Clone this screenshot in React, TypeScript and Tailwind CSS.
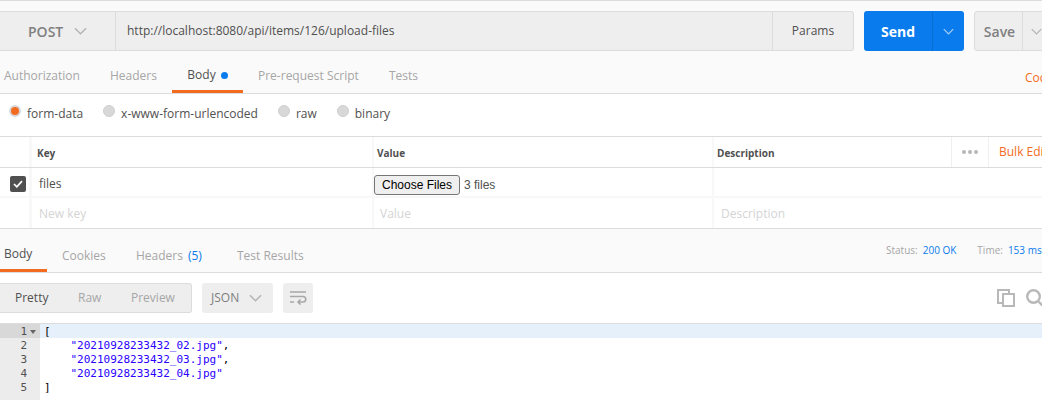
import React from 'react';

const sans = { fontFamily: '"Open Sans", sans-serif' };

function Chevron({ className }: { className?: string }) {
  return (
    <svg viewBox="0 0 14 8" className={className} fill="none" stroke="currentColor" strokeWidth="1.6">
      <path d="M1 1l6 6 6-6" />
    </svg>
  );
}

function Radio({ label, active }: { label: string; active?: boolean }) {
  return (
    <div className="flex items-center gap-[6px]">
      {active ? (
        <span className="w-[12px] h-[12px] rounded-full bg-[#f26b21] border-2 border-[#d8d8d8] -mt-[6px]" />
      ) : (
        <span className="w-[12px] h-[12px] rounded-full bg-[#d8d8d8] border border-[#cfcfcf] -mt-[6px]" />
      )}
      <span className="text-[12px] text-[#505050] leading-none">{label}</span>
    </div>
  );
}

export default function App() {
  return (
    <div className="w-[1042px] h-[400px] overflow-hidden bg-white flex flex-col whitespace-nowrap" style={sans}>
      {/* request bar + tabs */}
      <div className="h-[94px] shrink-0 bg-[#fafafa] border-t border-b border-[#dcdcdc] flex flex-col">
        <div className="flex pt-[10px] h-[50px] shrink-0">
          <div className="w-[854px] shrink-0 h-[40px] flex bg-[#eeeeee] border-y border-r border-[#dcdcdc] rounded-r-[3px]">
            <div className="w-[116px] shrink-0 border-r border-[#dcdcdc] flex items-center pl-[28px] gap-[11px] text-[#808080]">
              <span className="text-[14px] font-semibold">POST</span>
              <Chevron className="w-[13px] h-[8px] text-[#b4b4b4]" />
            </div>
            <div className="flex-1 pl-[11px] flex items-center text-[12px] text-[#505050] -mt-[1px]">
              http://localhost:8080/api/items/126/upload-files
            </div>
            <div className="w-[81px] shrink-0 border-l border-[#dcdcdc] flex items-center justify-center text-[12px] text-[#505050]">
              Params
            </div>
          </div>
          <div className="ml-[10px] w-[100px] shrink-0 h-[40px] flex bg-[#097bed] rounded-[3px] text-white">
            <div className="w-[69px] flex items-center justify-center text-[14px] font-bold border-r border-[#0a6dd0]">Send</div>
            <div className="flex-1 flex items-center justify-center">
              <Chevron className="w-[11px] h-[7px] text-[#a5cdf5]" />
            </div>
          </div>
          <div className="ml-[10px] w-[80px] shrink-0 h-[40px] flex bg-[#eeeeee] border border-[#dcdcdc] rounded-[3px]">
            <div className="w-[48px] shrink-0 flex items-center justify-center pl-[2px] text-[14px] font-semibold text-[#808080] border-r border-[#dcdcdc]">Save</div>
            <div className="flex items-center pl-[8px]">
              <Chevron className="w-[11px] h-[7px] text-[#b4b4b4]" />
            </div>
          </div>
        </div>
        <div className="flex-1 flex text-[12px] text-[#a6a6a6] relative">
          <div className="pl-[4px] w-[110px] flex items-center h-[42px] pt-[8px]">Authorization</div>
          <div className="w-[62px] flex items-center h-[42px] pt-[8px]">Headers</div>
          <div className="w-[71px] h-[42px] border-b-[3px] border-[#f26b21] flex items-center justify-center gap-[5px] text-[#505050] pt-[9px]">
            <span>Body</span>
            <span className="w-[7px] h-[7px] rounded-full bg-[#097bed]" />
          </div>
          <div className="w-[146px] pl-[15px] flex items-center h-[42px] pt-[8px]">Pre-request Script</div>
          <div className="flex items-center h-[42px] pt-[8px]">Tests</div>
          <div className="absolute left-[1025px] top-[6px] h-[42px] flex items-center text-[#f26b21]">Code</div>
        </div>
      </div>

      {/* body type radios */}
      <div className="h-[42px] shrink-0 flex items-center pl-[9px] pb-[2px]">
        <div className="flex items-center gap-[20px]">
          <Radio label="form-data" active />
          <Radio label="x-www-form-urlencoded" />
          <Radio label="raw" />
          <Radio label="binary" />
        </div>
      </div>

      {/* params table */}
      <div className="shrink-0 border-t border-b border-[#dcdcdc]">
        <div className="flex h-[31px] border-b border-[#dcdcdc] text-[10px] font-bold text-[#505050]">
          <div className="w-[32px] shrink-0 border-r-[3px] border-[#f8f8f8]" />
          <div className="w-[342px] shrink-0 pl-[5px] pt-[2px] flex items-center border-r-2 border-[#f8f8f8]">Key</div>
          <div className="w-[340px] shrink-0 pl-[3px] pt-[2px] flex items-center border-r-2 border-[#f8f8f8]">Value</div>
          <div className="w-[238px] shrink-0 pl-[3px] pt-[2px] flex items-center border-r border-[#f0f0f0]">Description</div>
          <div className="w-[37px] shrink-0 flex items-center justify-center gap-[2px] border-r border-[#f0f0f0]">
            <span className="w-[4px] h-[4px] rounded-full bg-[#b8b8b8]" />
            <span className="w-[4px] h-[4px] rounded-full bg-[#b8b8b8]" />
            <span className="w-[4px] h-[4px] rounded-full bg-[#b8b8b8]" />
          </div>
          <div className="pl-[10px] flex items-center text-[12px] font-normal text-[#f26b21]">Bulk Edit</div>
        </div>
        <div className="flex h-[30px] border-b-2 border-[#f8f8f8] text-[12px] text-[#505050]">
          <div className="w-[32px] shrink-0 border-r-[3px] border-[#f8f8f8] flex items-center pl-[10px] pt-[4px]">
            <span className="w-[16px] h-[16px] rounded-[2px] bg-[#505050] flex items-center justify-center">
              <svg viewBox="0 0 12 10" className="w-[10px] h-[8px]" fill="none" stroke="#fff" strokeWidth="2.2">
                <path d="M1 5l3.5 3.5L11 1.5" />
              </svg>
            </span>
          </div>
          <div className="w-[342px] shrink-0 pl-[7px] pt-[4px] flex items-center border-r-2 border-[#f8f8f8]">files</div>
          <div className="w-[340px] shrink-0 pt-[6px] flex items-center border-r-2 border-[#f8f8f8]">
            <span className="h-[20px] w-[86px] flex items-center justify-center bg-[#efefef] border border-[#767676] rounded-[3px] text-[12px] text-black" style={{ fontFamily: '"Liberation Sans", sans-serif' }}>
              Choose Files
            </span>
            <span className="ml-[4px] text-[12px] text-[#505050]" style={{ fontFamily: '"Liberation Sans", sans-serif' }}>3 files</span>
          </div>
          <div className="flex-1" />
        </div>
        <div className="flex h-[30px] text-[12px] text-[#d4d4d4]">
          <div className="w-[32px] shrink-0 border-r-[3px] border-[#f8f8f8]" />
          <div className="w-[342px] shrink-0 pl-[7px] pt-[2px] flex items-center border-r-2 border-[#f8f8f8]">New key</div>
          <div className="w-[340px] shrink-0 pl-[6px] pt-[2px] flex items-center border-r-2 border-[#f8f8f8]">Value</div>
          <div className="pl-[7px] pt-[2px] flex items-center">Description</div>
        </div>
      </div>

      {/* response tabs */}
      <div className="h-[44px] shrink-0 bg-[#fafafa] border-b border-[#dcdcdc] flex text-[12px] text-[#a6a6a6] relative">
        <div className="w-[47px] h-[43px] pl-[4px] pt-[10px] border-b-[3px] border-[#f26b21] flex items-center text-[#505050]">Body</div>
        <div className="w-[89px] pl-[15px] pt-[10px] flex items-center h-[43px]">Cookies</div>
        <div className="w-[101px] pt-[10px] flex items-center h-[43px]">
          Headers<span className="ml-[5px] text-[#097bed]">(5)</span>
        </div>
        <div className="pt-[10px] flex items-center h-[43px]">Test Results</div>
        <div className="absolute left-[886px] top-0 h-[43px] flex items-center gap-[21px] text-[10px] pb-[1px]">
          <span>
            Status:<span className="ml-[5px] text-[#097bed]">200 OK</span>
          </span>
          <span>
            Time:<span className="ml-[5px] text-[#097bed]">153 ms</span>
          </span>
        </div>
      </div>

      {/* response toolbar */}
      <div className="h-[50px] shrink-0 flex pt-[10px] text-[12px]">
        <div className="w-[192px] h-[30px] bg-[#eeeeee] border border-l-0 border-[#dcdcdc] rounded-r-[3px] flex items-center text-[#a6a6a6]">
          <div className="w-[62px] pl-[15px] text-[#505050]">Pretty</div>
          <div className="w-[54px] pl-[16px]">Raw</div>
          <div className="pl-[15px]">Preview</div>
        </div>
        <div className="ml-[10px] w-[71px] h-[30px] bg-[#eeeeee] rounded-[3px] flex items-center pl-[9px] gap-[10px] text-[#808080]">
          <span>JSON</span>
          <Chevron className="w-[13px] h-[8px] text-[#b4b4b4]" />
        </div>
        <div className="ml-[10px] w-[30px] h-[30px] bg-[#eeeeee] rounded-[3px] flex items-center justify-center">
          <svg viewBox="0 0 18 14" className="w-[18px] h-[14px]" fill="none" stroke="#a8a8a8" strokeWidth="1.6">
            <path d="M1 1h16M1 5.5h13a2.75 2.75 0 0 1 0 5.5H9M1 11h4M11.5 8.5L9 11l2.5 2.5" />
          </svg>
        </div>
        <div className="flex-1" />
        <div className="flex items-center gap-[11px] h-[30px] mr-[-2px]">
          <svg viewBox="0 0 18 18" className="w-[18px] h-[18px]" fill="none" stroke="#b8b8b8" strokeWidth="2">
            <path d="M12 4V1H1v13h4" />
            <rect x="6" y="5" width="11" height="12" />
          </svg>
          <svg viewBox="0 0 18 18" className="w-[18px] h-[18px]" fill="none" stroke="#b8b8b8" strokeWidth="2.4">
            <circle cx="7.5" cy="7.5" r="6.3" />
            <path d="M12.5 12.5L18 18" />
          </svg>
        </div>
      </div>

      {/* response code */}
      <div className="flex-1 flex border-t border-[#dcdcdc] text-[11px] leading-[14px]" style={{ fontFamily: '"DejaVu Sans Mono", monospace' }}>
        <div className="w-[40px] shrink-0 bg-[#ececec] text-[#505050] flex flex-col">
          <div className="h-[14px] bg-[#d8d8d8] flex items-center justify-end pr-[4px] gap-[3px] pt-[1px]">
            1
            <svg viewBox="0 0 6 4" className="w-[6px] h-[4px]" fill="#666">
              <path d="M0 0h6L3 4z" />
            </svg>
          </div>
          <div className="h-[14px] pt-[1px] pr-[13px] text-right">2</div>
          <div className="h-[14px] pt-[1px] pr-[13px] text-right">3</div>
          <div className="h-[14px] pt-[1px] pr-[13px] text-right">4</div>
          <div className="h-[14px] pt-[1px] pr-[13px] text-right">5</div>
        </div>
        <div className="flex-1 flex flex-col text-black whitespace-pre">
          <div className="h-[14px] bg-[#e6f0fb] pl-[4px] pt-[1px]">[</div>
          <div className="h-[14px] pl-[4px] pt-[1px]">    <span className="text-[#2a00ff]">"20210928233432_02.jpg"</span>,</div>
          <div className="h-[14px] pl-[4px] pt-[1px]">    <span className="text-[#2a00ff]">"20210928233432_03.jpg"</span>,</div>
          <div className="h-[14px] pl-[4px] pt-[1px]">    <span className="text-[#2a00ff]">"20210928233432_04.jpg"</span></div>
          <div className="h-[14px] pl-[4px] pt-[1px]">]</div>
        </div>
      </div>
    </div>
  );
}
